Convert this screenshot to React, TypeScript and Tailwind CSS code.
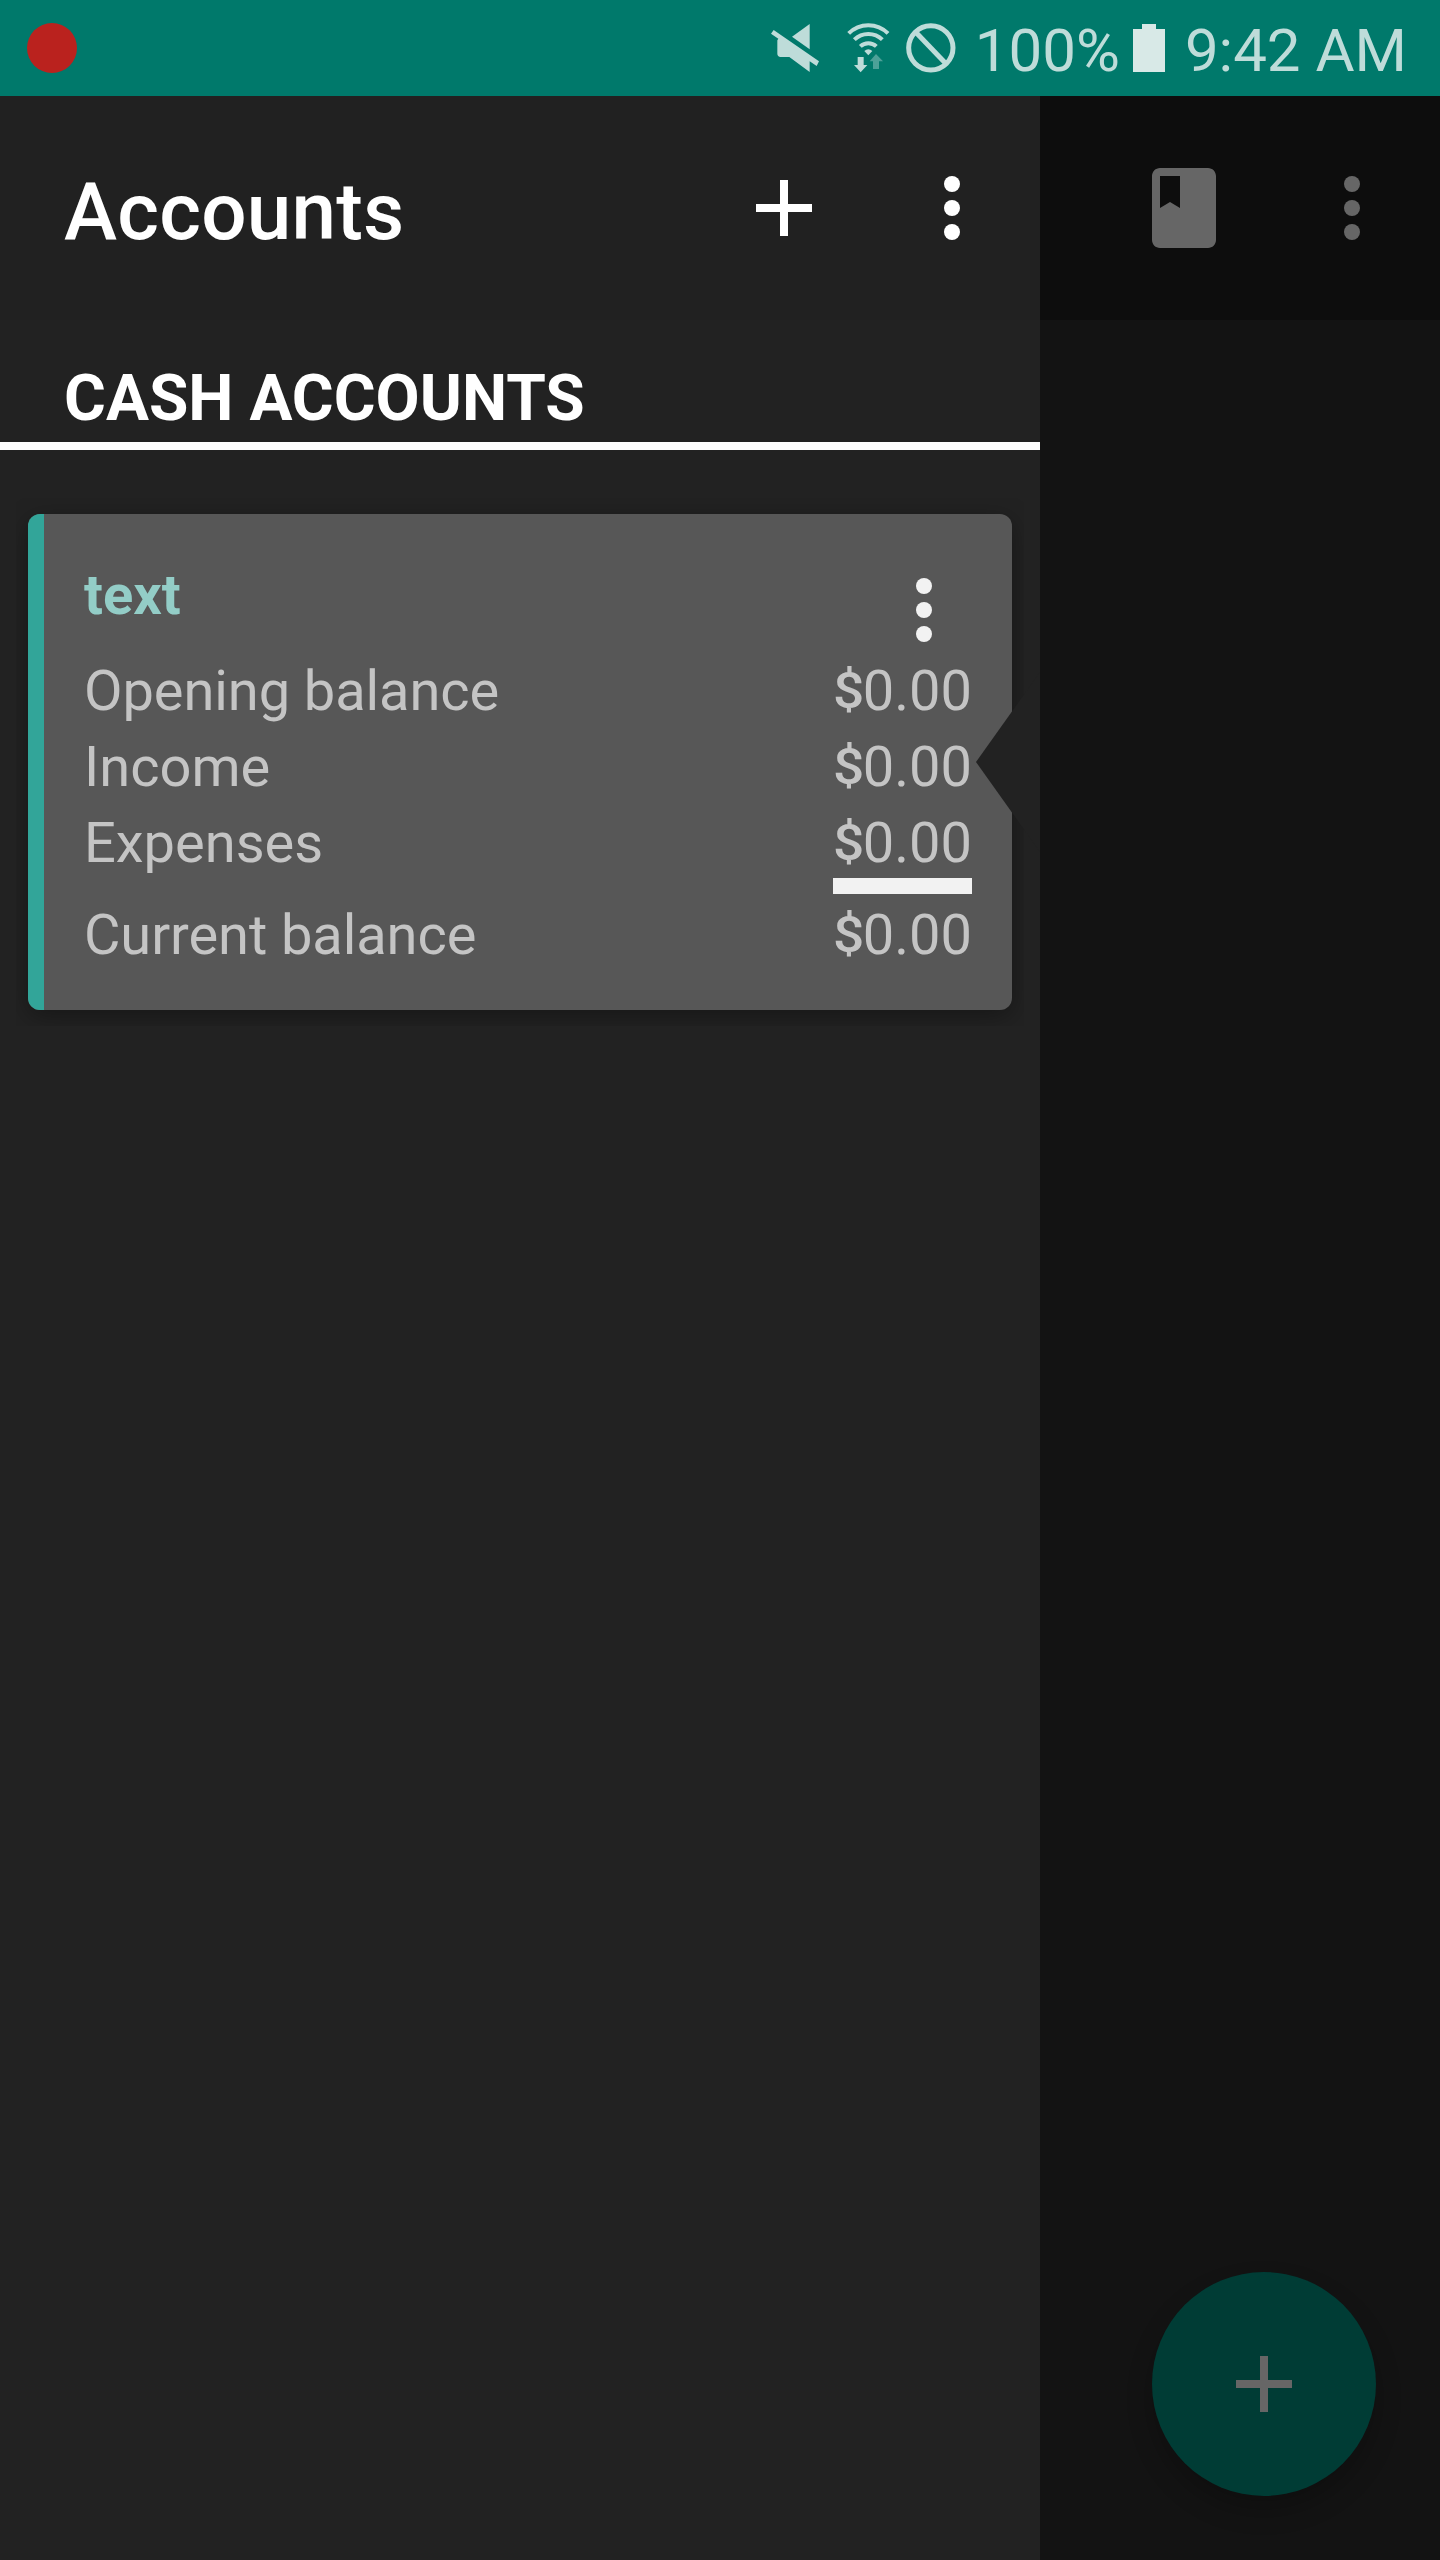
import React from "react";

function MuteIcon() {
  return (
    <svg className="mr-7 mt-6 h-12 w-12 shrink-0" viewBox="93 72 144 144" fill="#bedcd9">
      <path d="M209 72v76l-53-38z" />
      <path d="M101 90l136 94-7 14-21-14v32l-61-45h-26q-10-2-10-10v-40l3-5-22-15z" />
    </svg>
  );
}

function WifiIcon() {
  return (
    <svg className="mr-4 mt-[23px] h-[50px] w-[43px] shrink-0" viewBox="321 69 129 150" fill="#bedcd9">
      <g fill="none" stroke="#bedcd9" strokeWidth="12">
        <path d="M326 100a83 83 0 0 1 118 0" />
        <path d="M343 119a60 60 0 0 1 84 0" />
        <path d="M361 139a35 35 0 0 1 48 0" />
      </g>
      <path d="M373 153q12-10 24 0l-12 13z" />
      <path d="M353 171h18v24h11l-20 22-20-22h11z" />
      <path d="M408 162l21 22h-12v23h-18v-23h-10z" fill="#4da198" />
    </svg>
  );
}

function BlockedIcon() {
  return (
    <svg className="mr-[19px] mt-[23px] h-[50px] w-[50px] shrink-0" viewBox="500 69 150 150" fill="none" stroke="#bedcd9" strokeWidth="15">
      <circle cx="574.5" cy="143.5" r="66.5" />
      <path d="M528 95l92 96" />
    </svg>
  );
}

function BatteryIcon() {
  return (
    <svg className="ml-[13px] mr-5 mt-6 h-12 w-8 shrink-0" viewBox="0 0 32 48" fill="#d8e9e7">
      <path d="M9 0h14v5h9v43H0V5h9z" />
    </svg>
  );
}

function PlusIcon({ className }: { className: string }) {
  return (
    <svg className={className} viewBox="0 0 24 24" fill="currentColor">
      <path d="M19 13h-6v6h-2v-6H5v-2h6V5h2v6h6z" />
    </svg>
  );
}

function MoreIcon({ className }: { className: string }) {
  return (
    <svg className={className} viewBox="0 0 24 24" fill="currentColor">
      <circle cx="12" cy="6" r="2" />
      <circle cx="12" cy="12" r="2" />
      <circle cx="12" cy="18" r="2" />
    </svg>
  );
}

function BookIcon() {
  return (
    <svg className="h-24 w-24" viewBox="0 0 24 24" fill="currentColor">
      <path d="M18 2H6c-1.1 0-2 .9-2 2v16c0 1.1.9 2 2 2h12c1.1 0 2-.9 2-2V4c0-1.1-.9-2-2-2zM6 4h5v8l-2.5-1.5L6 12z" />
    </svg>
  );
}

function StatusBar() {
  return (
    <header className="flex h-24 shrink-0 items-start bg-[#00796b] pl-[27px] pr-[33px] text-[60px] leading-[69px] text-[#bedcd9]">
      <div className="mr-auto mt-[23px] h-[50px] w-[50px] rounded-full bg-[#ba221e]" />
      <MuteIcon />
      <WifiIcon />
      <BlockedIcon />
      <span className="mt-4 whitespace-nowrap">100%</span>
      <BatteryIcon />
      <span className="mt-4 whitespace-nowrap">9:42 AM</span>
    </header>
  );
}

function Row({ label, amount, tight = false }: { label: string; amount: string; tight?: boolean }) {
  return (
    <div className="flex h-[76px] justify-between leading-[76px]">
      <span className={tight ? "tracking-[-0.08px]" : ""}>{label}</span>
      <span className="flex">
        <span className="w-[30px] origin-center translate-x-[0.7px] scale-x-110 text-center text-[50px] font-medium">$</span>
        <span>{amount}</span>
      </span>
    </div>
  );
}

function AccountCard() {
  return (
    <section className="relative mt-12 h-[528px] pl-4">
      <div className="h-full w-[1008px] overflow-hidden px-3 pt-4">
        <div className="flex h-[496px] rounded-xl bg-[#575757] shadow-[0_6px_24px_rgba(0,0,0,0.34)]">
          <div className="w-4 shrink-0 rounded-l-xl bg-[#32a599]" />
          <div className="flex flex-1 flex-col pl-10 pr-10 pt-[43px] text-[56px] text-[#c4c4c4]">
            <div className="flex h-24 items-start justify-between">
              <h3 className="font-bold leading-[76px] text-[#93cdc7]">text</h3>
              <MoreIcon className="mt-[5px] h-24 w-24 text-[#f2f2f2]" />
            </div>
            <Row label="Opening balance" amount="0.00" tight />
            <Row label="Income" amount="0.00" />
            <Row label="Expenses" amount="0.00" />
            <div className="-mt-[3px] mb-[3px] h-4 w-[139px] shrink-0 self-end bg-[#f2f2f2]" />
            <Row label="Current balance" amount="0.00" tight />
          </div>
        </div>
      </div>
      <svg className="absolute right-0 top-[174px] h-[180px] w-16" viewBox="0 0 64 180" fill="#222222">
        <path d="M0 90L64 0v180z" />
      </svg>
    </section>
  );
}

function AccountsDrawer() {
  return (
    <aside className="flex w-[1040px] shrink-0 flex-col bg-[#222222] text-white">
      <div className="flex h-56 shrink-0 items-center bg-[#212121] pl-16 pr-10">
        <h1 className="mr-auto pt-[7px] text-[80px] font-medium leading-[94px] tracking-[0.2px]">Accounts</h1>
        <PlusIcon className="h-24 w-24" />
        <MoreIcon className="ml-[72px] h-24 w-24" />
      </div>
      <div className="h-[130px] shrink-0 border-b-8 border-white pl-16 pt-[41px]">
        <h2 className="text-[64px] font-bold leading-[76px]">CASH ACCOUNTS</h2>
      </div>
      <AccountCard />
    </aside>
  );
}

function DimmedContent() {
  return (
    <main className="flex flex-1 flex-col bg-[#131313] text-[#666666]">
      <div className="flex h-56 items-center bg-[#0d0d0d] pl-24 pr-10">
        <BookIcon />
        <MoreIcon className="ml-[72px] h-24 w-24" />
      </div>
      <div className="mb-16 mr-16 mt-auto flex h-56 w-56 items-center justify-center self-end rounded-full bg-[#003c35] shadow-[0_14px_26px_rgba(0,0,0,0.22)]">
        <PlusIcon className="h-24 w-24" />
      </div>
    </main>
  );
}

export default function App() {
  return (
    <div className="flex h-[2560px] w-[1440px] flex-col overflow-hidden font-['Roboto',sans-serif]">
      <StatusBar />
      <div className="flex min-h-0 flex-1">
        <AccountsDrawer />
        <DimmedContent />
      </div>
    </div>
  );
}
